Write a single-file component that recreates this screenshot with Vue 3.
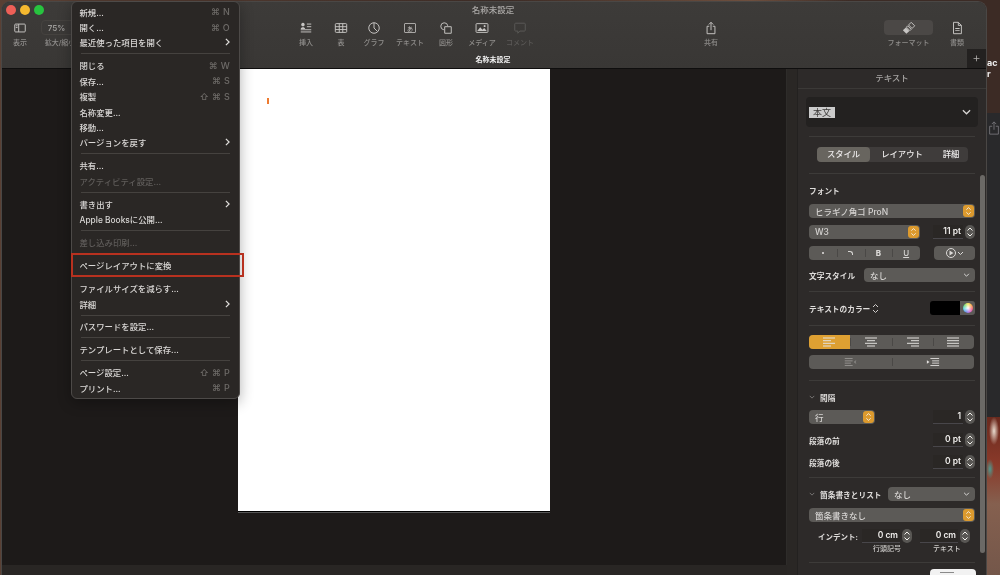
<template>
  <div class="desktop">
    <div class="window">
      <header class="toolbar">
        <div class="win-title">名称未設定</div>
        <div class="lights">
          <span class="light red"></span>
          <span class="light yellow"></span>
          <span class="light green"></span>
        </div>
        <div class="tools">
          <div v-for="group in toolGroups" :key="group.name" class="tool-group" :class="group.name">
            <div
              v-for="tool in group.items"
              :key="tool.label"
              class="tool"
              :class="{ dim: tool.dim }"
              :style="{ width: tool.width + 'px' }"
            >
              <div class="tool-icon" :class="{ active: tool.active, zoom: tool.zoom }">
                <span v-if="tool.zoom">75%</span>
                <span v-else-if="tool.icon === 'text'" class="text-icon">あ</span>
                <svg v-else viewBox="0 0 16 16">
                  <path v-for="d in icons[tool.icon]" :key="d" :d="d" />
                  <path v-if="solid[tool.icon]" class="solid" :d="solid[tool.icon]" />
                </svg>
              </div>
              <div class="tool-label">{{ tool.label }}</div>
            </div>
          </div>
        </div>
        <div class="tabbar">
          <span class="tab-title">名称未設定</span>
          <span class="tab-add">+</span>
        </div>
      </header>

      <div class="body">
        <main class="canvas-wrap">
          <div class="canvas">
            <div class="page"><i class="caret"></i></div>
          </div>
          <div class="statusbar"></div>
        </main>
        <div class="gutter"></div>

        <aside class="sidebar">
          <div class="side-head">テキスト</div>
          <div class="style-box">
            <span class="style-tag">本文</span>
            <svg class="chev-big" viewBox="0 0 10 6"><path d="M1 1l4 4 4-4" /></svg>
          </div>
          <hr class="m9" />
          <div class="segment">
            <span class="seg on">スタイル</span>
            <span class="seg mid">レイアウト</span>
            <span class="seg last">詳細</span>
          </div>
          <hr class="m11" />

          <div class="row label-row m9"><b>フォント</b></div>
          <div class="select wide m7">
            <span>ヒラギノ角ゴ ProN</span>
            <span class="orange"><svg viewBox="0 0 9 14"><path d="M2 5.5 4.5 3 7 5.5M2 8.5 4.5 11 7 8.5" /></svg></span>
          </div>
          <div class="row m7">
            <div class="select w111">
              <span>W3</span>
              <span class="orange"><svg viewBox="0 0 9 14"><path d="M2 5.5 4.5 3 7 5.5M2 8.5 4.5 11 7 8.5" /></svg></span>
            </div>
            <div class="num-group">
              <span class="num">11 pt</span>
              <span class="stepper"><svg viewBox="0 0 9 14"><path d="M2 5.5 4.5 3 7 5.5M2 8.5 4.5 11 7 8.5" /></svg></span>
            </div>
          </div>
          <div class="row m7">
            <div class="btn-group w111">
              <span class="btn"><i class="dot"></i></span>
              <span class="btn"><i class="slash"></i></span>
              <span class="btn strong">B</span>
              <span class="btn under">U</span>
            </div>
            <div class="btn-group w41">
              <span class="btn">
                <svg class="gear" viewBox="0 0 20 12">
                  <circle cx="6" cy="6" r="4.5" />
                  <path class="solid" d="M4.5 3.5v5L8.5 6z" />
                  <path d="M13 5l2.5 2.5L18 5" />
                </svg>
              </span>
            </div>
          </div>
          <div class="row m8">
            <b class="cell-label">文字スタイル</b>
            <div class="select w111">
              <span>なし</span>
              <svg class="chev" viewBox="0 0 8 5"><path d="M1 1l3 3 3-3" /></svg>
            </div>
          </div>
          <hr class="m9" />

          <div class="row m9">
            <b class="cell-label">テキストのカラー
              <svg class="updown" viewBox="0 0 7 11"><path d="M1 4 3.5 1.5 6 4M1 7l2.5 2.5L6 7" /></svg>
            </b>
            <div class="color">
              <span class="well"></span>
              <span class="wheel-wrap"><i class="wheel"></i></span>
            </div>
          </div>
          <hr class="m10" />

          <div class="btn-group full m9">
            <span v-for="(lines, i) in alignIcons" :key="i" class="btn" :class="{ 'btn-on': i === 0 }">
              <svg class="lines" viewBox="0 0 14 10"><path :d="lines" /></svg>
            </span>
          </div>
          <div class="btn-group full m6">
            <span class="btn off">
              <svg class="lines" viewBox="0 0 16 10"><path d="M2 1h9M2 3.7h9M2 6.3h7M2 9h9M15 3.5 13 5l2 1.5" /></svg>
            </span>
            <span class="btn">
              <svg class="lines" viewBox="0 0 16 10"><path d="M5 1h10M7 3.7h8M7 6.3h8M5 9h10" /><path class="solid" d="M1 3l3 2-3 2z" /></svg>
            </span>
          </div>
          <hr class="m11" />

          <div class="row label-row m9">
            <b class="fold">
              <svg class="fold-chev" viewBox="0 0 8 5"><path d="M1 1l3 3 3-3" /></svg>間隔
            </b>
          </div>
          <div class="row m6">
            <div class="select w66">
              <span>行</span>
              <span class="orange"><svg viewBox="0 0 9 14"><path d="M2 5.5 4.5 3 7 5.5M2 8.5 4.5 11 7 8.5" /></svg></span>
            </div>
            <div class="num-group">
              <span class="num">1</span>
              <span class="stepper"><svg viewBox="0 0 9 14"><path d="M2 5.5 4.5 3 7 5.5M2 8.5 4.5 11 7 8.5" /></svg></span>
            </div>
          </div>
          <div class="row m9">
            <b class="cell-label">段落の前</b>
            <div class="num-group">
              <span class="num">0 pt</span>
              <span class="stepper"><svg viewBox="0 0 9 14"><path d="M2 5.5 4.5 3 7 5.5M2 8.5 4.5 11 7 8.5" /></svg></span>
            </div>
          </div>
          <div class="row m8">
            <b class="cell-label">段落の後</b>
            <div class="num-group">
              <span class="num">0 pt</span>
              <span class="stepper"><svg viewBox="0 0 9 14"><path d="M2 5.5 4.5 3 7 5.5M2 8.5 4.5 11 7 8.5" /></svg></span>
            </div>
          </div>
          <hr class="m8" />

          <div class="row m9">
            <b class="fold">
              <svg class="fold-chev" viewBox="0 0 8 5"><path d="M1 1l3 3 3-3" /></svg>箇条書きとリスト
            </b>
            <div class="select w87">
              <span>なし</span>
              <svg class="chev" viewBox="0 0 8 5"><path d="M1 1l3 3 3-3" /></svg>
            </div>
          </div>
          <div class="select wide m7">
            <span>箇条書きなし</span>
            <span class="orange"><svg viewBox="0 0 9 14"><path d="M2 5.5 4.5 3 7 5.5M2 8.5 4.5 11 7 8.5" /></svg></span>
          </div>
          <div class="indent-row m7">
            <b class="indent-label">インデント:</b>
            <div class="num-group">
              <span class="num w38">0 cm</span>
              <span class="stepper"><svg viewBox="0 0 9 14"><path d="M2 5.5 4.5 3 7 5.5M2 8.5 4.5 11 7 8.5" /></svg></span>
            </div>
            <div class="num-group">
              <span class="num w38">0 cm</span>
              <span class="stepper"><svg viewBox="0 0 9 14"><path d="M2 5.5 4.5 3 7 5.5M2 8.5 4.5 11 7 8.5" /></svg></span>
            </div>
          </div>
          <div class="indent-captions">
            <span>行頭記号</span>
            <span>テキスト</span>
          </div>
          <hr class="m8" />
          <div class="white-btn"><i></i></div>
          <div class="scrollbar"></div>
        </aside>
      </div>
    </div>

    <div class="backdrop">
      <div class="bg-brown">
        <span>ac</span>
        <span>r</span>
      </div>
      <div class="bg-window">
        <svg viewBox="0 0 16 16"><path d="M6 6H3v9h10V6h-3M8 10V1M5.5 3.5 8 1l2.5 2.5" /></svg>
      </div>
      <div class="bg-photo"></div>
    </div>

    <nav class="menu">
      <template v-for="(item, i) in menuItems" :key="i">
        <div v-if="item.sep" class="menu-sep"></div>
        <div v-else class="menu-item" :class="{ disabled: item.disabled }">
          <span>{{ item.label }}</span>
          <span v-if="item.key" class="shortcut">{{ item.key }}</span>
          <svg v-if="item.sub" class="sub" viewBox="0 0 6 10"><path d="M1 1l4 4-4 4" /></svg>
        </div>
      </template>
      <div class="highlight"></div>
    </nav>
  </div>
</template>

<script setup>
const toolGroups = [
  {
    name: 'left',
    items: [
      { label: '表示', icon: 'view', width: 36 },
      { label: '拡大/縮小', zoom: true, width: 44 },
    ],
  },
  {
    name: 'middle',
    items: [
      { label: '挿入', icon: 'insert', width: 36 },
      { label: '表', icon: 'table', width: 34 },
      { label: 'グラフ', icon: 'chart', width: 32 },
      { label: 'テキスト', icon: 'text', width: 40 },
      { label: '図形', icon: 'shape', width: 32 },
      { label: 'メディア', icon: 'media', width: 40 },
      { label: 'コメント', icon: 'comment', width: 36, dim: true },
    ],
  },
  { name: 'share', items: [{ label: '共有', icon: 'share', width: 36 }] },
  {
    name: 'right',
    items: [
      { label: 'フォーマット', icon: 'brush', width: 49, active: true },
      { label: '書類', icon: 'doc', width: 36 },
    ],
  },
]

const icons = {
  view: ['M3 3.5h10a1 1 0 0 1 1 1v7a1 1 0 0 1-1 1H3a1 1 0 0 1-1-1v-7a1 1 0 0 1 1-1zM6.5 3.5v9M3.2 5.5h2M3.2 7.5h2'],
  insert: ['M9 3.5h5M9 6.5h5M2 10h12M2 12.5h12'],
  table: ['M2.5 3h11a1 1 0 0 1 1 1v8a1 1 0 0 1-1 1h-11a1 1 0 0 1-1-1V4a1 1 0 0 1 1-1zM1.5 6.5h13M1.5 9.8h13M6 3v10M10 3v10'],
  chart: ['M8 2a6 6 0 1 0 6 6 6 6 0 0 0-6-6zM8 2v6l4 4'],
  shape: ['M10 5.5A4 4 0 1 0 5.5 10', 'M6.5 6.5h7.5v7.5H6.5z'],
  media: ['M2 3h12a.8.8 0 0 1 .8.8v8.4a.8.8 0 0 1-.8.8H2a.8.8 0 0 1-.8-.8V3.8A.8.8 0 0 1 2 3z'],
  comment: ['M3 2.5h10a1 1 0 0 1 1 1v7a1 1 0 0 1-1 1H8l-2.5 2.5v-2.5H3a1 1 0 0 1-1-1v-7a1 1 0 0 1 1-1z'],
  share: ['M6 6H3.5v8.5h9V6H10M8 10.5V1.5M5.5 4 8 1.5 10.5 4'],
  brush: ['M10.5 1.5 14.5 5.5 11.5 8.5 7.5 4.5z', 'M6.5 5.5l4 4-1.500 1.500-4-4z'],
  doc: ['M4 1.5h5.5L13 5v9.5H4zM9.5 1.5V5H13'],
}

// filled parts of a few toolbar icons
const solid = {
  insert: 'M4.5 2a2 2 0 1 0 .01 0zM2 9c0-2.5 5-2.5 5 0z',
  media: 'M2.5 11.5 6 7l2.5 3 2-2 3 3.5zM11 4.5a1.2 1.2 0 1 0 .01 0z',
  brush: 'M4.5 7.5l4 4-3.5 3-4-4z',
  doc: 'M6 8h5v1H6zM6 10.5h5v1H6z',
}

const alignIcons = [
  'M0 1h12M0 3.7h8M0 6.3h12M0 9h8',
  'M1 1h12M3 3.7h8M1 6.3h12M3 9h8',
  'M2 1h12M6 3.7h8M2 6.3h12M6 9h8',
  'M1 1h12M1 3.7h12M1 6.3h12M1 9h12',
]

const menuItems = [
  { label: '新規...', key: '⌘ N' },
  { label: '開く...', key: '⌘ O' },
  { label: '最近使った項目を開く', sub: true },
  { sep: true },
  { label: '閉じる', key: '⌘ W' },
  { label: '保存...', key: '⌘ S' },
  { label: '複製', key: '⇧ ⌘ S' },
  { label: '名称変更...' },
  { label: '移動...' },
  { label: 'バージョンを戻す', sub: true },
  { sep: true },
  { label: '共有...' },
  { label: 'アクティビティ設定...', disabled: true },
  { sep: true },
  { label: '書き出す', sub: true },
  { label: 'Apple Booksに公開...' },
  { sep: true },
  { label: '差し込み印刷...', disabled: true },
  { sep: true },
  { label: 'ページレイアウトに変換' },
  { sep: true },
  { label: 'ファイルサイズを減らす...' },
  { label: '詳細', sub: true },
  { sep: true },
  { label: 'パスワードを設定...' },
  { sep: true },
  { label: 'テンプレートとして保存...' },
  { sep: true },
  { label: 'ページ設定...', key: '⇧ ⌘ P' },
  { label: 'プリント...', key: '⌘ P' },
]
</script>

<style>
html,
body {
  margin: 0;
  background: #2a1f1b;
}
</style>

<style scoped>
.desktop {
  position: relative;
  display: flex;
  width: 1000px;
  height: 575px;
  overflow: hidden;
  font-family: Inter, "Noto Sans CJK JP", "DejaVu Sans", sans-serif;
  background: linear-gradient(90deg, #5a4034 0, #3c2b25 50%, #6e4f3e 75%, #3c2b25 85%);
  filter: blur(0.3px);
}

.window {
  flex: none;
  display: flex;
  flex-direction: column;
  position: relative;
  width: 986px;
  height: 574px;
  margin: 1px 0 0 1px;
  border: 1px solid #4a4745;
  border-bottom: 0;
  border-radius: 9px 9px 0 0;
  box-sizing: border-box;
  overflow: hidden;
  background: #2d2a29;
}

/* toolbar */
.toolbar {
  position: relative;
  flex: none;
  height: 67px;
  background: linear-gradient(#3d3b39, #393735);
  border-bottom: 1px solid #0f0e0e;
  box-sizing: border-box;
}

.win-title {
  height: 17px;
  line-height: 16px;
  padding-right: 2px;
  text-align: center;
  font-size: 8.5px;
  font-weight: 500;
  color: #aaa8a6;
}

.lights {
  position: absolute;
  top: 3px;
  left: 4px;
  display: flex;
  gap: 4px;
}

.light {
  width: 10px;
  height: 10px;
  border-radius: 50%;
}
.red { background: #ee5f57; }
.yellow { background: #f5b82f; }
.green { background: #27c33f; }

.tools {
  display: flex;
  height: 30px;
  padding-top: 1px;
  box-sizing: border-box;
}

.tool-group { display: flex; }
.tool-group.middle { margin-left: 206px; }
.tool-group.share { margin-left: 155px; }
.tool-group.right { margin-left: 155px; }
.tool-group.right .tool + .tool { margin-left: 6px; }

.tool {
  display: flex;
  flex-direction: column;
  align-items: center;
  flex: none;
}

.tool-icon {
  display: flex;
  align-items: center;
  justify-content: center;
  height: 15px;
  width: 100%;
  border-radius: 4px;
}

.tool-icon.active { background: #4b4846; }

.tool-icon.zoom {
  box-sizing: border-box;
  width: 41px;
  margin-left: 3px;
  padding-right: 10px;
  border: 1px solid #45423f;
  font-size: 8px;
  font-weight: 600;
  color: #9b9997;
}

.tool-icon svg {
  width: 14px;
  height: 14px;
  fill: none;
  stroke: #c7c5c3;
  stroke-width: 1.1;
}

.tool-icon svg .solid {
  fill: #c7c5c3;
  stroke: none;
}

.text-icon {
  display: block;
  width: 12px;
  height: 10px;
  line-height: 9px;
  text-align: center;
  font-size: 6px;
  color: #c7c5c3;
  border: 1px solid #a9a7a5;
  border-radius: 1px;
  box-sizing: border-box;
}

.tool-label {
  margin-top: 1px;
  line-height: 13px;
  font-size: 7px;
  font-weight: 500;
  white-space: nowrap;
  color: #8f8d8b;
}

.tool.dim .tool-label { color: #5b5957; }
.tool.dim svg { stroke: #5b5957; }

.tabbar {
  display: flex;
  align-items: center;
  height: 19px;
  position: relative;
}

.tab-title {
  flex: 1;
  padding-right: 2px;
  text-align: center;
  font-size: 7px;
  font-weight: 700;
  color: #f2f2f2;
}

.tab-add {
  position: absolute;
  right: 0;
  top: 0;
  width: 19px;
  height: 19px;
  line-height: 17px;
  text-align: center;
  font-size: 13px;
  font-weight: 300;
  color: #b0aeac;
  background: #232120;
}

/* main area */
.body {
  display: flex;
  flex: 1;
  min-height: 0;
}

.canvas-wrap {
  display: flex;
  flex-direction: column;
  flex: none;
  width: 785px;
}

.canvas {
  flex: 1;
  background: #1d1a19;
  border-right: 1px solid #2e2c2a;
  padding-left: 236px;
}

.page {
  position: relative;
  width: 312px;
  height: 442px;
  background: #fff;
  box-shadow: 0 1px 0 #000, 0 2px 0 #555;
}

.caret {
  position: absolute;
  left: 29px;
  top: 29px;
  width: 1.5px;
  height: 6px;
  background: #ee7b30;
}

.statusbar {
  flex: none;
  height: 10px;
  background: #292624;
}

.gutter {
  flex: none;
  width: 11px;
  background: #2a2725;
  border-right: 1px solid #232120;
  box-sizing: border-box;
}

/* inspector */
.sidebar {
  position: relative;
  flex: 1;
  display: flex;
  flex-direction: column;
  padding: 0 11px;
  min-width: 0;
  overflow: hidden;
  background: #2d2a29;
  font-size: 8px;
  color: #d4d2d0;
}

.side-head {
  flex: none;
  height: 20px;
  margin: 0 -11px;
  line-height: 19px;
  text-align: center;
  font-size: 8.5px;
  font-weight: 500;
  color: #a5a3a1;
  border-bottom: 1px solid #3b3937;
  box-sizing: border-box;
}

.style-box {
  flex: none;
  display: flex;
  align-items: center;
  justify-content: space-between;
  height: 30px;
  margin: 8px -3px 0;
  padding: 0 7px 0 3px;
  background: #232120;
  border-radius: 4px;
}

.style-tag {
  width: 26px;
  height: 11px;
  margin-top: 1px;
  line-height: 11px;
  text-align: center;
  font-size: 9px;
  color: #3a3836;
  background: #cbcbcb;
}

.chev-big {
  width: 9px;
  height: 6px;
  fill: none;
  stroke: #d8d6d4;
  stroke-width: 1.4;
}

hr {
  flex: none;
  width: 100%;
  height: 1px;
  margin: 0;
  border: 0;
  background: #3d3b39;
}

.m6 { margin-top: 6px; }
.m7 { margin-top: 7px; }
.m8 { margin-top: 8px; }
.m9 { margin-top: 9px; }
.m10 { margin-top: 10px; }
.m11 { margin-top: 11px; }

.segment {
  flex: none;
  display: flex;
  width: 151px;
  height: 15px;
  margin: 10px 0 0 8px;
  line-height: 15px;
  text-align: center;
  font-size: 8.3px;
  font-weight: 500;
  color: #eceaea;
  background: #3f3c3b;
  border-radius: 4px;
}

.seg.on {
  width: 53px;
  background: #68655f;
  border-radius: 4px;
}
.seg.mid { width: 64px; }
.seg.last { width: 34px; }

.row {
  flex: none;
  display: flex;
  align-items: center;
  justify-content: space-between;
  height: 14px;
}

b {
  font-weight: 600;
  font-size: 7.7px;
  color: #dedcda;
  white-space: nowrap;
}

.select {
  display: flex;
  align-items: center;
  justify-content: space-between;
  flex: none;
  height: 14px;
  padding-left: 6px;
  box-sizing: border-box;
  background: #5c5a57;
  border-radius: 4px;
  font-size: 8.5px;
  font-weight: 500;
  color: #d6d4d2;
}

.select.wide { width: 100%; }
.w111 { width: 111px; }
.w87 { width: 87px; }
.w66 { width: 66px; }
.w41 { width: 41px; }

.orange {
  display: flex;
  width: 11px;
  height: 12px;
  margin-right: 1px;
  background: #dc9a2e;
  border-radius: 3px;
}

.orange svg,
.stepper svg {
  width: 100%;
  height: 100%;
  fill: none;
  stroke: #f4f2ee;
  stroke-width: 1;
}

.chev {
  width: 7px;
  height: 4px;
  margin-right: 5px;
  fill: none;
  stroke: #dddbd9;
  stroke-width: 1.2;
}

.num-group {
  display: flex;
  align-items: center;
  gap: 2px;
}

.num {
  display: block;
  width: 30px;
  height: 14px;
  line-height: 13px;
  padding-right: 2px;
  box-sizing: border-box;
  text-align: right;
  font-size: 8.5px;
  font-weight: 600;
  color: #efedeb;
  background: #2a2725;
  border-bottom: 1px solid #48464a;
}

.num.w38 { width: 38px; }

.stepper {
  display: flex;
  flex: none;
  width: 10px;
  height: 14px;
  background: #595754;
  border-radius: 5px;
}

.btn-group {
  display: flex;
  flex: none;
  height: 14px;
  background: #5c5a57;
  border-radius: 4px;
  overflow: hidden;
}

.btn-group.full {
  width: 165px;
  height: 14px;
}

.btn {
  flex: 1;
  display: flex;
  align-items: center;
  justify-content: center;
  font-size: 8px;
  color: #d8d6d4;
}

.btn + .btn {
  background: linear-gradient(#4a4846, #4a4846) left center / 1px 8px no-repeat;
}
.btn-on { background: #dea032; }
.btn.off { opacity: 0.45; }

.dot {
  width: 2px;
  height: 2px;
  border-radius: 50%;
  background: #e4e2e0;
}

.slash {
  width: 4px;
  height: 3px;
  border-top: 1px solid #d8d6d4;
  border-right: 1px solid #d8d6d4;
  border-top-right-radius: 3px;
}

.strong { font-weight: 800; }
.under { text-decoration: underline; font-weight: 500; }

.gear {
  width: 20px;
  height: 12px;
  fill: none;
  stroke: #dbd9d7;
  stroke-width: 1;
}
.gear .solid { fill: #dbd9d7; stroke: none; }

.cell-label {
  display: flex;
  align-items: center;
}

.updown {
  width: 7px;
  height: 11px;
  margin-left: 2px;
  fill: none;
  stroke: #cfcdcb;
  stroke-width: 1;
}

.color {
  display: flex;
  width: 45px;
  height: 14px;
  border-radius: 3px;
  overflow: hidden;
}

.well {
  flex: 1;
  background: #000;
}

.wheel-wrap {
  display: flex;
  align-items: center;
  justify-content: center;
  width: 15px;
  background: #5c5a57;
}

.wheel {
  width: 10px;
  height: 10px;
  border-radius: 50%;
  background:
    radial-gradient(circle, #fff 0, rgba(255, 255, 255, 0.5) 35%, transparent 75%),
    conic-gradient(#f7e34a, #f79a3a, #ef4d6a, #c755d6, #5a7ee8, #4fd0e0, #63d36b, #f7e34a);
}

.lines {
  width: 14px;
  height: 10px;
  fill: none;
  stroke: #e2e0de;
  stroke-width: 1;
}
.lines .solid { fill: #e2e0de; stroke: none; }

.fold {
  display: flex;
  align-items: center;
}

.fold-chev {
  width: 6px;
  height: 4px;
  margin: 0 5px 0 0;
  fill: none;
  stroke: #8d8b89;
  stroke-width: 1;
}

.indent-row {
  flex: none;
  display: flex;
  align-items: center;
  height: 14px;
  gap: 8px;
}

.indent-label {
  width: 46px;
  margin-right: -1px;
  padding-left: 9px;
  box-sizing: border-box;
  font-size: 7.5px;
}

.indent-captions {
  flex: none;
  display: flex;
  height: 10px;
  margin-top: 1px;
  padding-left: 64px;
  gap: 32px;
  line-height: 10px;
  font-size: 7px;
  font-weight: 500;
  color: #cfcdcb;
}

.white-btn {
  flex: none;
  width: 46px;
  height: 14px;
  margin: 6px 0 0 121px;
  padding: 3px 0 0 10px;
  box-sizing: border-box;
  background: #f2f2f2;
  border-radius: 4px 4px 0 0;
}

.white-btn i {
  display: block;
  width: 14px;
  height: 1px;
  background: #8a8a8a;
}

.scrollbar {
  position: absolute;
  top: 106px;
  right: 1px;
  width: 5px;
  height: 378px;
  border-radius: 3px;
  background: #6b6966;
}

/* what shows of the desktop beside the window */
.backdrop {
  flex: 1;
  display: flex;
  flex-direction: column;
}

.bg-brown {
  display: flex;
  flex-direction: column;
  justify-content: flex-end;
  height: 113px;
  padding-bottom: 34px;
  box-sizing: border-box;
  background: #3c2b25;
  font-size: 9px;
  font-weight: 700;
  line-height: 11px;
  color: #ededed;
}

.bg-window {
  height: 304px;
  padding-top: 8px;
  box-sizing: border-box;
  background: #29292b;
}

.bg-window svg {
  display: block;
  width: 14px;
  height: 14px;
  fill: none;
  stroke: #77767a;
  stroke-width: 1;
}

.bg-photo {
  flex: 1;
  background:
    radial-gradient(ellipse 5px 14px at 7px 14px, #eadccf 0, rgba(234, 220, 207, 0) 100%),
    radial-gradient(ellipse 4px 10px at 3px 52px, #4d9a90 0, rgba(77, 154, 144, 0) 100%),
    linear-gradient(#6a2a1e 0, #8a3a2a 30%, #85604f 55%, #74574a 100%);
}

/* file menu */
.menu {
  position: absolute;
  top: 1px;
  left: 71px;
  width: 169px;
  height: 398px;
  padding-top: 2px;
  box-sizing: border-box;
  background: #2a2725;
  border: 1px solid #4d4a48;
  border-radius: 6px;
  box-shadow: 0 4px 14px rgba(0, 0, 0, 0.3);
  font-size: 8.4px;
  font-weight: 500;
  color: #dad8d6;
}

.menu-item {
  display: flex;
  align-items: center;
  justify-content: space-between;
  height: 15.4px;
  padding: 0 9px 0 7.5px;
  white-space: nowrap;
}

.menu-item.disabled { color: #5f5c5a; }

.shortcut {
  font-size: 9px;
  letter-spacing: 0.3px;
  color: #6e6b68;
}

.sub {
  width: 5px;
  height: 8px;
  fill: none;
  stroke: #e2e0de;
  stroke-width: 1.5;
}

.menu-sep {
  height: 1px;
  margin: 3.3px 9px;
  background: #45423f;
}

.highlight {
  position: absolute;
  top: 251px;
  left: -1px;
  width: 173px;
  height: 24px;
  box-sizing: border-box;
  border: 2px solid #b8311f;
}
</style>
